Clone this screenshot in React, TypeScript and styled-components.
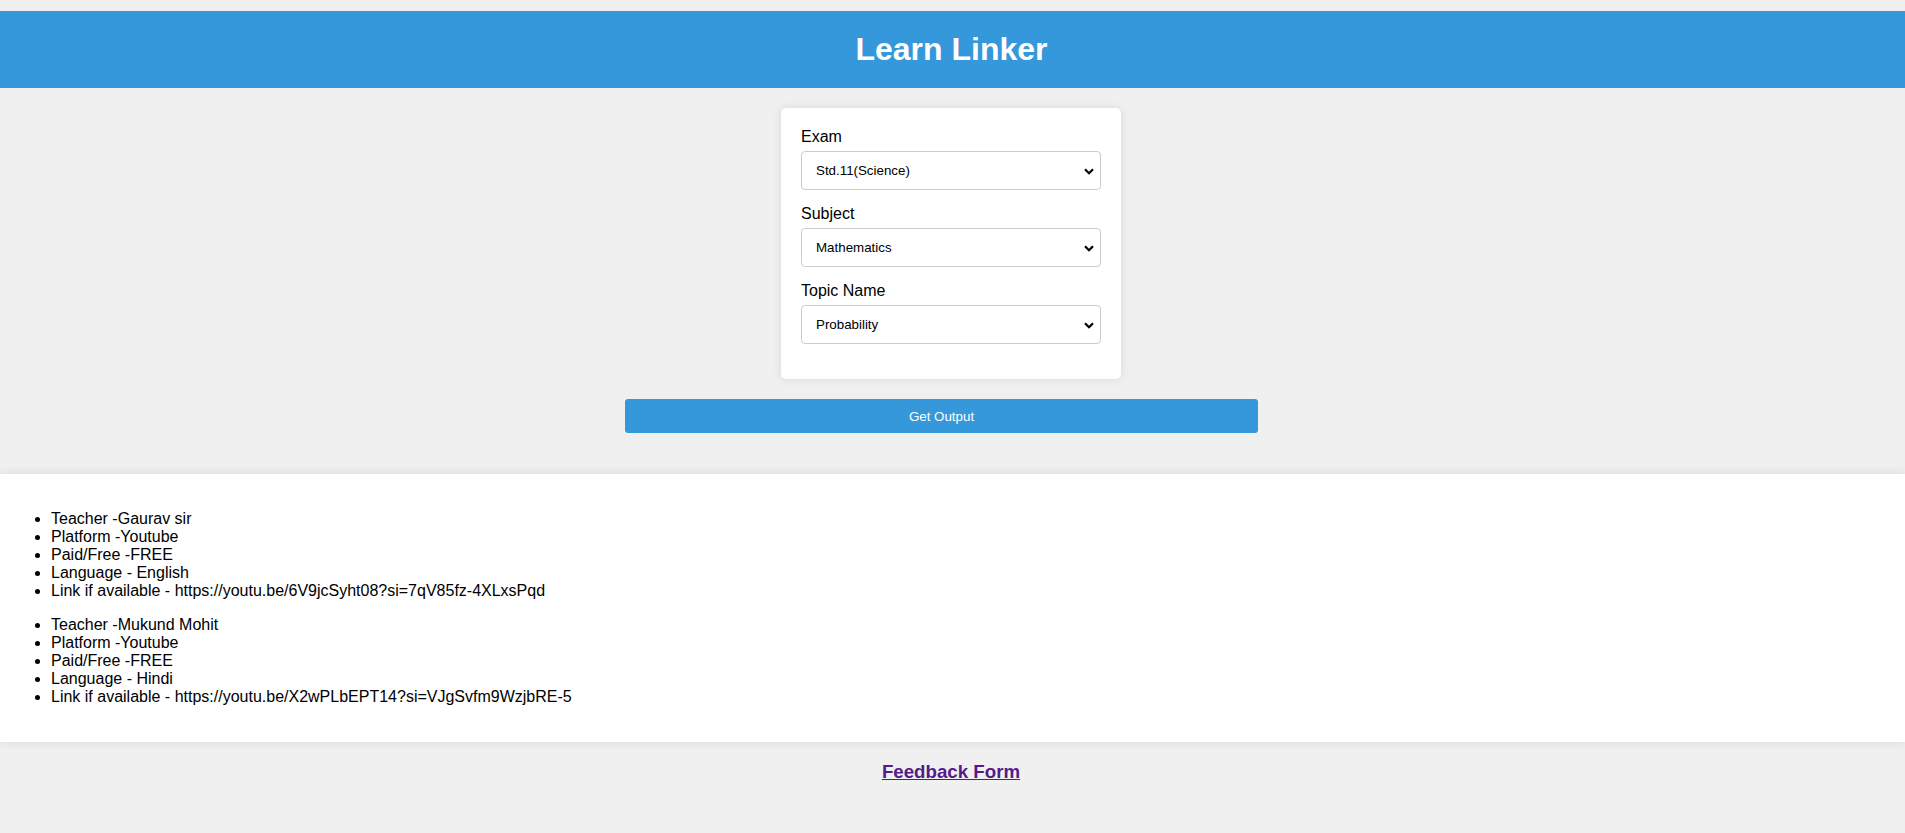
import React from "react";
import styled, { createGlobalStyle } from "styled-components";

const GlobalStyle = createGlobalStyle`
  html, body {
    margin: 0;
    padding: 0;
    background: #f0f0f0;
    font-family: Arial, "Liberation Sans", sans-serif;
    color: #000;
  }
  body {
    padding-top: 11px;
  }
`;

const Header = styled.header`
  background: #3498db;
  padding: 20px 0;
  text-align: center;
`;

const Title = styled.h1`
  margin: 0 2px 0 0;
  font-size: 32px;
  font-weight: bold;
  color: #fff;
  line-height: 37px;
`;

const Card = styled.form`
  width: 300px;
  margin: 20px 0 0 calc(50% - 171.5px);
  padding: 20px;
  background: #fff;
  border-radius: 5px;
  box-shadow: 0 0 10px rgba(0, 0, 0, 0.1);
  display: flex;
  flex-direction: column;
`;

const Label = styled.label`
  font-size: 16px;
  line-height: 18px;
  margin-bottom: 5px;
`;

const SelectWrap = styled.div`
  position: relative;
  margin-bottom: 15px;
`;

const Select = styled.select`
  display: block;
  appearance: none;
  -webkit-appearance: none;
  height: 39px;
  padding: 0 30px 0 14px;
  border: 1px solid #ccc;
  border-radius: 4px;
  background: #fff;
  font-family: Arial, "Liberation Sans", sans-serif;
  font-size: 13.333px;
  color: #000;
  box-sizing: border-box;
  width: 100%;
`;

const Chevron = styled.svg`
  position: absolute;
  right: 7px;
  top: 50%;
  width: 10px;
  height: 7px;
  margin-top: -3px;
  pointer-events: none;
`;

const ButtonRow = styled.div`
  margin-top: 20px;
  padding-left: 625px;
`;

const Button = styled.button`
  display: block;
  width: 633px;
  height: 34px;
  background: #3498db;
  color: #fff;
  border: none;
  border-radius: 3px;
  font-family: Arial, "Liberation Sans", sans-serif;
  font-size: 13.333px;
  cursor: pointer;
`;

const Output = styled.section`
  margin-top: 41px;
  background: #fff;
  padding: 20px 11px;
  box-shadow: 0 0 10px rgba(0, 0, 0, 0.1);
`;

const List = styled.ul`
  margin: 16px 0;
  padding-left: 40px;
  font-size: 16px;
  line-height: 18px;
`;

const Footer = styled.h3`
  text-align: center;
  margin: 19px 3px 19px 0;
  font-size: 18.72px;
  font-weight: bold;
`;

const Link = styled.a`
  color: #551a8b;
  text-decoration: underline;
`;

type Resource = {
  teacher: string;
  platform: string;
  paid: string;
  language: string;
  link: string;
};

const resources: Resource[] = [
  {
    teacher: "Gaurav sir",
    platform: "Youtube",
    paid: "FREE",
    language: "English",
    link: "https://youtu.be/6V9jcSyht08?si=7qV85fz-4XLxsPqd",
  },
  {
    teacher: "Mukund Mohit",
    platform: "Youtube",
    paid: "FREE",
    language: "Hindi",
    link: "https://youtu.be/X2wPLbEPT14?si=VJgSvfm9WzjbRE-5",
  },
];

type Field = { id: string; label: string; value: string; text: string };

const fields: Field[] = [
  { id: "exam", label: "Exam", value: "std11", text: "Std.11(Science)" },
  { id: "subject", label: "Subject", value: "math", text: "Mathematics" },
  { id: "topic", label: "Topic Name", value: "prob", text: "Probability" },
];

export default function App() {
  return (
    <>
      <GlobalStyle />
      <Header>
        <Title>Learn Linker</Title>
      </Header>
      <Card onSubmit={(e) => e.preventDefault()}>
        {fields.map((f) => (
          <React.Fragment key={f.id}>
            <Label htmlFor={f.id}>{f.label}</Label>
            <SelectWrap>
              <Select id={f.id} defaultValue={f.value}>
                <option value={f.value}>{f.text}</option>
              </Select>
              <Chevron viewBox="0 0 10 7" aria-hidden="true">
                <polyline
                  points="1,1.2 5,5.2 9,1.2"
                  fill="none"
                  stroke="#000"
                  strokeWidth="2.2"
                  strokeLinecap="butt"
                  strokeLinejoin="miter"
                />
              </Chevron>
            </SelectWrap>
          </React.Fragment>
        ))}
      </Card>
      <ButtonRow>
        <Button type="button">Get Output</Button>
      </ButtonRow>
      <Output>
        {resources.map((r) => (
          <List key={r.teacher}>
            <li>Teacher -{r.teacher}</li>
            <li>Platform -{r.platform}</li>
            <li>Paid/Free -{r.paid}</li>
            <li>Language - {r.language}</li>
            <li>Link if available - {r.link}</li>
          </List>
        ))}
      </Output>
      <Footer>
        <Link href="#feedback">Feedback Form</Link>
      </Footer>
    </>
  );
}
